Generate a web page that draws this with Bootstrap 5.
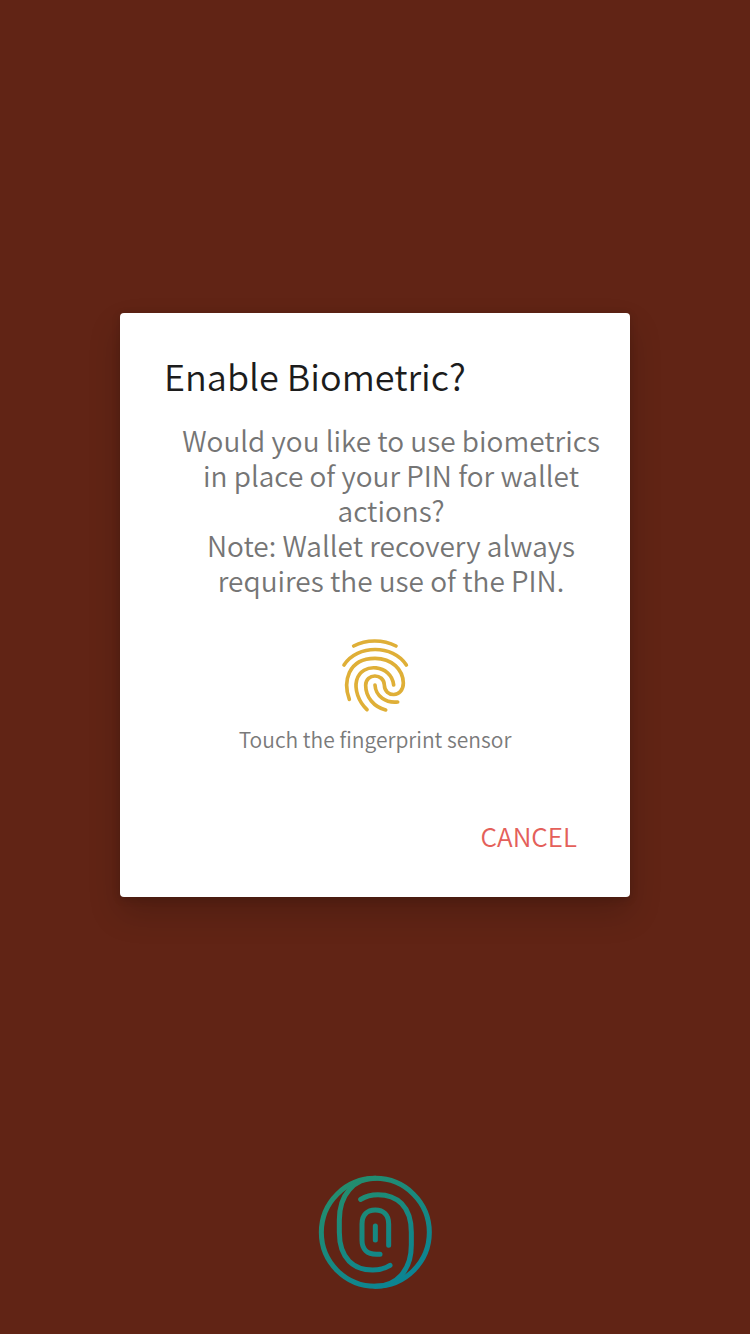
<!DOCTYPE html>
<html lang="en">
<head>
<meta charset="utf-8">
<meta name="viewport" content="width=device-width, initial-scale=1">
<title>Enable Biometric</title>
<link href="https://cdn.jsdelivr.net/npm/bootstrap@5.3.0/dist/css/bootstrap.min.css" rel="stylesheet">
<style>
  body { background: #612415; font-family: "Noto Sans CJK SC", "Noto Sans", sans-serif; font-weight: 350; }
  .stage { padding-top: 45px; }
  .prompt { width: 68%; border-radius: 4px; padding: 38px 12px 32px 44px; box-shadow: 0 16px 32px rgba(0, 0, 0, .18), 0 2px 8px rgba(0, 0, 0, .15); }
  .prompt-title { font-size: 36px; line-height: 48px; font-weight: 350; color: #1c1c1c; }
  .prompt-text { font-size: 28px; line-height: 35px; color: #757575; margin-top: 24px; padding: 0 12px; }
  .prompt-status { margin: 31px 32px 0 0; gap: 4px; font-size: 21px; line-height: 32px; color: #7a7a7a; }
  .prompt-action { margin: 52px 32px 0 0; }
  .btn-cancel { --bs-btn-color: #e4605a; --bs-btn-hover-color: #c94a44; --bs-btn-padding-x: 8px; --bs-btn-padding-y: 8px; --bs-btn-font-size: 26px; --bs-btn-line-height: 40px; --bs-btn-font-weight: 350; }
  .sensor { padding-bottom: 39px; }
</style>
</head>
<body>
<div class="d-flex flex-column min-vh-100">
  <main class="stage flex-fill d-flex align-items-center justify-content-center">
    <section class="prompt bg-white" role="dialog" aria-labelledby="title">
      <h1 class="prompt-title mb-0" id="title">Enable Biometric?</h1>
      <div class="prompt-text text-center">
        <p class="mb-0">Would you like to use biometrics in place of your PIN for wallet actions?</p>
        <p class="mb-0">Note: Wallet recovery always requires the use of the PIN.</p>
      </div>
      <div class="prompt-status d-flex flex-column align-items-center">
        <svg width="90" height="90" viewBox="0 0 270 270" fill="none" stroke="#dfaf37" stroke-width="11" stroke-linecap="round" aria-hidden="true">
          <path d="M71 51C108 31 160 31 198 51"/>
          <path d="M42 108C82 46 189 46 229 108"/>
          <path d="M58 211C39 161 52 88 135 88C186 88 219 122 220 162C220 207 164 207 163 168C162 132 107 132 107 169C107 205 132 234 167 243"/>
          <path d="M111 242C85 217 73 181 80 154C94 98 184 106 191 168"/>
          <path d="M135 168C137 202 168 223 203 219"/>
        </svg>
        <span>Touch the fingerprint sensor</span>
      </div>
      <div class="prompt-action text-end">
        <button type="button" class="btn btn-cancel">CANCEL</button>
      </div>
    </section>
  </main>
  <footer class="sensor text-center">
    <svg class="d-block mx-auto" width="130" height="130" viewBox="0 0 390 390" fill="none" stroke="url(#teal)" stroke-width="15" stroke-linecap="round" role="img" aria-label="Fingerprint sensor">
      <defs>
        <linearGradient id="teal" gradientUnits="userSpaceOnUse" x1="100" y1="50" x2="290" y2="350">
          <stop offset="0" stop-color="#248d6d"/>
          <stop offset="1" stop-color="#0b8494"/>
        </linearGradient>
      </defs>
      <circle cx="196" cy="202" r="162"/>
      <path d="M196 40C132 40 88 88 88 165V202C88 282 133 315 188 315C208 315 224 311 240 301"/>
      <path d="M196 364C260 364 304 316 304 239V202C304 122 259 89 204 89C184 89 168 93 152 103"/>
      <path d="M210 268H199C172 268 156 253 156 226V177C156 150 172 135 196 135C220 135 236 150 236 177V241"/>
      <path d="M196 183L196 225"/>
    </svg>
  </footer>
</div>
<script src="https://cdn.jsdelivr.net/npm/bootstrap@5.3.0/dist/js/bootstrap.bundle.min.js"></script>
</body>
</html>
